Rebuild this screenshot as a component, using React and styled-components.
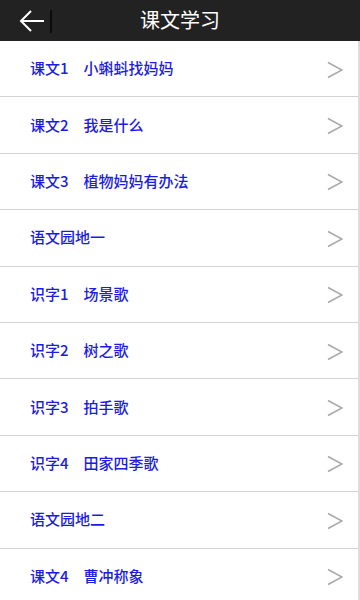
import React from "react";
import styled, { createGlobalStyle } from "styled-components";

const lessons = [
  ["课文1", "小蝌蚪找妈妈"],
  ["课文2", "我是什么"],
  ["课文3", "植物妈妈有办法"],
  ["语文园地一"],
  ["识字1", "场景歌"],
  ["识字2", "树之歌"],
  ["识字3", "拍手歌"],
  ["识字4", "田家四季歌"],
  ["语文园地二"],
  ["课文4", "曹冲称象"],
];

export default function App() {
  return (
    <>
      <Global />
      <Page>
        <Header>
          <BackButton>
            <svg width="28" height="24" viewBox="0 0 28 24">
              <path
                d="M26 12H3M13 2L3 12l10 10"
                fill="none"
                stroke="#fff"
                strokeWidth="2"
              />
            </svg>
          </BackButton>
          <Divider />
          <Title>课文学习</Title>
        </Header>
        <List>
          {lessons.map(([label, name]) => (
            <Row key={label}>
              <Label>
                {label}
                {name && <Name>{name}</Name>}
              </Label>
              <svg width="16" height="18" viewBox="0 0 16 18">
                <path
                  d="M1 1.5l14 7.5-14 7.5"
                  fill="none"
                  stroke="#a8a8a8"
                  strokeWidth="1.6"
                />
              </svg>
            </Row>
          ))}
        </List>
      </Page>
    </>
  );
}

const Global = createGlobalStyle`
  body {
    margin: 0;
    background: #fff;
    font-family: "Noto Sans CJK SC", "Noto Sans", sans-serif;
  }
`;

const Page = styled.div`
  width: 360px;
  height: 600px;
  overflow: hidden;
  display: flex;
  flex-direction: column;
`;

const Header = styled.div`
  height: 41px;
  flex: none;
  background: #222;
  position: relative;
  display: flex;
  align-items: center;
  padding-left: 18px;
`;

const BackButton = styled.div`
  display: flex;
  align-items: center;
  width: 28px;
  height: 24px;
`;

const Divider = styled.div`
  width: 2px;
  height: 23px;
  background: #0c0c0c;
  margin-left: 4px;
  margin-top: 2px;
`;

const Title = styled.div`
  position: absolute;
  left: 0;
  right: 0;
  top: 0;
  line-height: 40px;
  text-align: center;
  color: #fff;
  font-size: 20px;
  pointer-events: none;
`;

const List = styled.div`
  flex: 1;
  border-right: 2px solid #dcdcdc;
`;

const Row = styled.div`
  height: 55.4px;
  border-bottom: 1px solid #d2d2d2;
  display: flex;
  align-items: center;
  justify-content: space-between;
  padding: 0 15px 0 30px;

  svg {
    margin-top: 2px;
  }
`;

const Label = styled.div`
  color: #1c1ce0;
  font-size: 15px;
  font-weight: 500;
  margin-top: -2px;
`;

const Name = styled.span`
  margin-left: 15px;
`;
